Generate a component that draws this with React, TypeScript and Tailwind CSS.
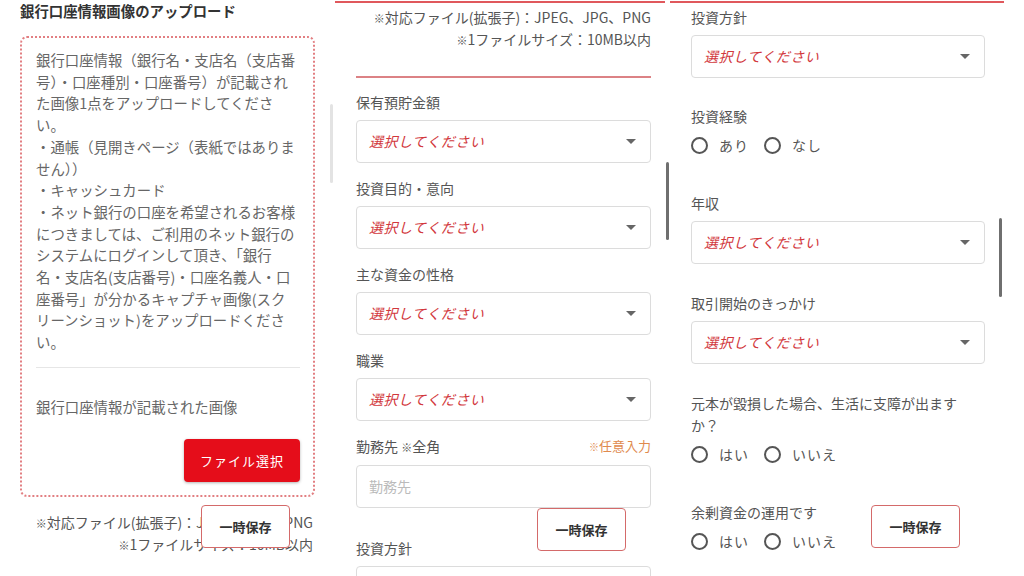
import React from 'react';

const font = { fontFamily: '"Noto Sans CJK JP", "Noto Sans", sans-serif' };

const bankText = [
  '銀行口座情報（銀行名・支店名（支店番',
  '号）・口座種別・口座番号）が記載され',
  'た画像1点をアップロードしてくださ',
  'い。',
  '・通帳（見開きページ（表紙ではありま',
  'せん））',
  '・キャッシュカード',
  '・ネット銀行の口座を希望されるお客様',
  'につきましては、ご利用のネット銀行の',
  'システムにログインして頂き、「銀行',
  '名・支店名(支店番号)・口座名義人・口',
  '座番号」が分かるキャプチャ画像(スク',
  'リーンショット)をアップロードくださ',
  'い。',
];

function Label({ children, className = '' }: { children: React.ReactNode; className?: string }) {
  return <div className={`text-[14px] leading-[20px] text-[#555] whitespace-nowrap ${className}`}>{children}</div>;
}

function SelectBox({ className = '' }: { className?: string }) {
  return (
    <div
      className={`h-[43px] border border-[#dcdcdc] rounded-[4px] bg-white flex items-center justify-between pl-[12px] pr-[14px] ${className}`}
    >
      <span className="italic text-[14px] text-[#d2383d] tracking-[0.5px]">選択してください</span>
      <svg width="10" height="5" viewBox="0 0 10 5">
        <path d="M0 0 L10 0 L5 5 Z" fill="#666" />
      </svg>
    </div>
  );
}

function Radio({ label }: { label: string }) {
  return (
    <div className="flex items-center gap-[11px]">
      <span className="w-[17px] h-[17px] rounded-full border-2 border-[#555] bg-white" />
      <span className="text-[14px] text-[#555] leading-[20px] tracking-[1px]">{label}</span>
    </div>
  );
}

function RadioRow({ options, className = '' }: { options: string[]; className?: string }) {
  return (
    <div className={`flex items-center gap-[15px] h-[20px] ${className}`}>
      {options.map((o) => (
        <Radio key={o} label={o} />
      ))}
    </div>
  );
}

function SaveButton({ left, top }: { left: number; top: number }) {
  return (
    <button
      className="absolute w-[89px] h-[43px] bg-white border border-[#d46a6a] rounded-[4px] text-[13px] font-bold text-[#333]"
      style={{ left, top }}
    >
      一時保存
    </button>
  );
}

function Notes({ className = '' }: { className?: string }) {
  return (
    <div className={`text-right text-[14px] leading-[21px] text-[#555] whitespace-nowrap ${className}`}>
      <div>
        <span className="text-[11px]">※</span>対応ファイル(拡張子)：JPEG、JPG、PNG
      </div>
      <div>
        <span className="text-[11px]">※</span>1ファイルサイズ：10MB以内
      </div>
    </div>
  );
}

function ColumnOne() {
  return (
    <div className="relative w-[335px] h-[576px] overflow-hidden bg-white">
      <div className="pl-[20px] pt-[1px]">
        <div className="text-[14.4px] font-bold leading-[20px] text-[#333]">銀行口座情報画像のアップロード</div>
        <div className="mt-[15px] w-[295px] border-2 border-dotted border-[#e27f82] rounded-[7px] pl-[14px] pr-[13px] pt-[11px] pb-[13px]">
          <div className="text-[14.4px] leading-[21.7px] text-[#666] whitespace-nowrap">
            {bankText.map((t, i) => (
              <div key={i}>{t}</div>
            ))}
          </div>
          <div className="mt-[14px] h-px bg-[#e6e6e6]" />
          <div className="mt-[28px] text-[14.4px] leading-[22px] text-[#666]">銀行口座情報が記載された画像</div>
          <div className="mt-[21px] flex justify-end">
            <button className="w-[116px] h-[43px] bg-[#e50d1a] rounded-[4px] text-white text-[13px] tracking-[1px] shadow-[0_1px_3px_rgba(0,0,0,0.3)]">
              ファイル選択
            </button>
          </div>
        </div>
        <Notes className="mt-[15px] pr-[2px] w-[295px]" />
      </div>
      <SaveButton left={201} top={505} />
      <div className="absolute left-[330px] top-[104px] w-[3px] h-[79px] rounded bg-[#e3e3e3]" />
    </div>
  );
}

function ColumnTwo() {
  return (
    <div className="relative w-[335px] h-[576px] overflow-hidden bg-white">
      <div className="mt-px mr-[5px] h-[2px] bg-[#e0585c]" />
      <div className="pl-[21px] w-[316px]">
        <Notes className="mt-[4px]" />
        <div className="mt-[25px] h-[2px] bg-[#dc8285]" />
        <Label className="mt-[14px]">保有預貯金額</Label>
        <SelectBox className="mt-[8px]" />
        <Label className="mt-[15px]">投資目的・意向</Label>
        <SelectBox className="mt-[8px]" />
        <Label className="mt-[15px]">主な資金の性格</Label>
        <SelectBox className="mt-[8px]" />
        <Label className="mt-[15px]">職業</Label>
        <SelectBox className="mt-[8px]" />
        <div className="mt-[15px] flex justify-between items-center">
          <Label>
            勤務先 <span className="text-[11px]">※</span>全角
          </Label>
          <span className="text-[13px] leading-[20px] text-[#e08a4e]">
            <span className="text-[10px]">※</span>任意入力
          </span>
        </div>
        <div className="mt-[8px] h-[43px] border border-[#dcdcdc] rounded-[4px] flex items-center pl-[12px] text-[14px] text-[#bbb]">
          勤務先
        </div>
        <Label className="mt-[30px]">投資方針</Label>
        <SelectBox className="mt-[8px]" />
      </div>
      <SaveButton left={202} top={508} />
      <div className="absolute left-[331px] top-[162px] w-[3px] h-[78px] rounded bg-[#6f6f6f]" />
    </div>
  );
}

function ColumnThree() {
  return (
    <div className="relative w-[354px] h-[576px] overflow-hidden bg-white">
      <div className="mt-px mr-[20px] h-[2px] bg-[#e0585c]" />
      <div className="pl-[21px] w-[315px]">
        <Label className="mt-[4px]">投資方針</Label>
        <SelectBox className="mt-[8px]" />
        <Label className="mt-[28px]">投資経験</Label>
        <RadioRow className="mt-[9px]" options={['あり', 'なし']} />
        <Label className="mt-[38px]">年収</Label>
        <SelectBox className="mt-[8px]" />
        <Label className="mt-[29px]">取引開始のきっかけ</Label>
        <SelectBox className="mt-[8px]" />
        <div className="mt-[28px] text-[14px] leading-[22px] text-[#555]">
          <div>元本が毀損した場合、生活に支障が出ます</div>
          <div>か？</div>
        </div>
        <RadioRow className="mt-[8px]" options={['はい', 'いいえ']} />
        <div className="mt-[37px] text-[14px] leading-[22px] text-[#555]">余剰資金の運用です</div>
        <RadioRow className="mt-[8px]" options={['はい', 'いいえ']} />
      </div>
      <SaveButton left={201} top={505} />
      <div className="absolute left-[329px] top-[218px] w-[3px] h-[79px] rounded bg-[#6f6f6f]" />
    </div>
  );
}

export default function App() {
  return (
    <div className="w-[1024px] h-[576px] flex bg-white overflow-hidden" style={font}>
      <ColumnOne />
      <ColumnTwo />
      <ColumnThree />
    </div>
  );
}
